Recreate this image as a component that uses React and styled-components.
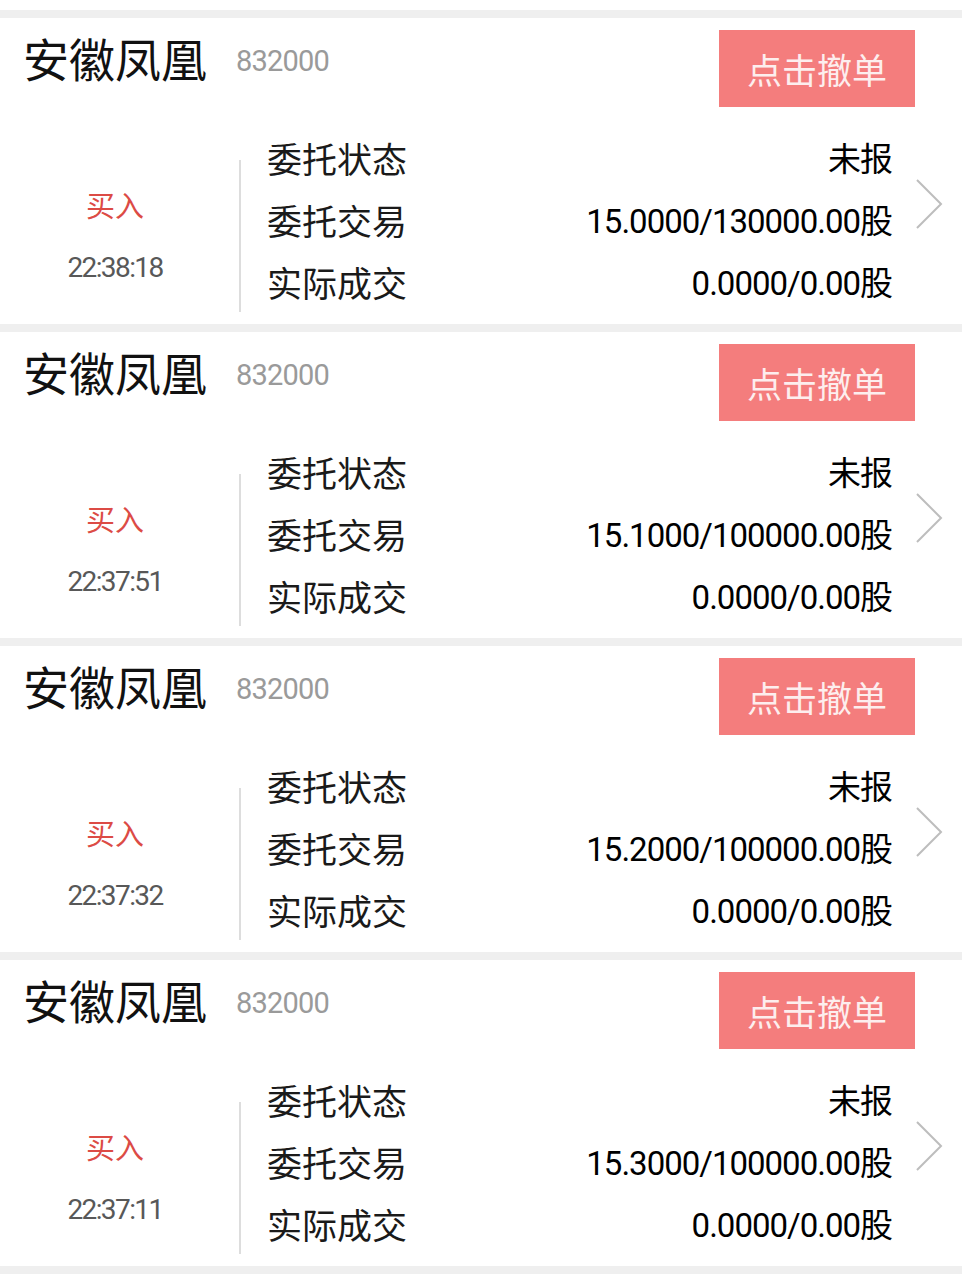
import React from 'react';
import styled, { createGlobalStyle } from 'styled-components';

const GlobalStyle = createGlobalStyle`
    body {
        margin: 0;
        background: #ffffff;
        font-family: Roboto, "Noto Sans CJK SC", sans-serif;
    }
`;

const Page = styled.div`
    width: 962px;
    padding-top: 10px;
`;

const Card = styled.div`
    border-top: 8px solid #efefef;
    height: 306px;
    box-sizing: content-box;
    display: flex;
    flex-direction: column;
    &:last-child {
        border-bottom: 8px solid #efefef;
    }
`;

const Header = styled.div`
    display: flex;
    align-items: flex-start;
    padding: 12px 47px 0 23px;
`;

const Title = styled.div`
    font-family: "Noto Sans CJK SC", sans-serif;
    font-size: 46px;
    line-height: 54px;
    color: #111;
`;

const Code = styled.div`
    font-family: Roboto, sans-serif;
    font-size: 29px;
    line-height: 54px;
    letter-spacing: -0.8px;
    color: #9a9a9a;
    margin-left: 29px;
    padding-top: 4px;
`;

const CancelButton = styled.div`
    margin-left: auto;
    width: 196px;
    height: 77px;
    background-color: #f47d7d;
    color: #fdeeee;
    font-family: "Noto Sans CJK SC", sans-serif;
    font-size: 35px;
    display: flex;
    align-items: center;
    justify-content: center;
    cursor: pointer;
`;

const Body = styled.div`
    display: flex;
    align-items: flex-end;
    margin-top: 19px;
    padding-right: 19px;
`;

const Side = styled.div`
    width: 230px;
    padding-right: 9px;
    height: 152px;
    border-right: 2px solid #dddddd;
    display: flex;
    flex-direction: column;
    align-items: center;
    justify-content: center;
    gap: 24px;
`;

const Direction = styled.div`
    font-family: "Noto Sans CJK SC", sans-serif;
    font-size: 29px;
    line-height: 40px;
    color: #dc4b45;
`;

const Time = styled.div`
    font-family: Roboto, sans-serif;
    font-size: 28px;
    line-height: 40px;
    letter-spacing: -1.6px;
    color: #585858;
`;

const Rows = styled.div`
    flex: 1;
    padding-left: 26px;
`;

const Row = styled.div`
    display: flex;
    align-items: center;
    justify-content: space-between;
    height: 62px;
`;

const Label = styled.div`
    font-family: "Noto Sans CJK SC", sans-serif;
    font-size: 35px;
    color: #1a1a1a;
`;

const Value = styled.div`
    font-family: Roboto, "Noto Sans CJK SC", sans-serif;
    font-size: 33px;
    letter-spacing: -1px;
    color: #000;
`;

const Chevron = styled.svg`
    align-self: flex-start;
    margin-top: 52px;
    margin-left: 23px;
    flex-shrink: 0;
`;

const orders = [
    { time: '22:38:18', trade: '15.0000/130000.00股' },
    { time: '22:37:51', trade: '15.1000/100000.00股' },
    { time: '22:37:32', trade: '15.2000/100000.00股' },
    { time: '22:37:11', trade: '15.3000/100000.00股' },
];

const OrderCard = ({ order }) => (
    <Card>
        <Header>
            <Title>安徽凤凰</Title>
            <Code>832000</Code>
            <CancelButton>点击撤单</CancelButton>
        </Header>
        <Body>
            <Side>
                <Direction>买入</Direction>
                <Time>{order.time}</Time>
            </Side>
            <Rows>
                <Row><Label>委托状态</Label><Value>未报</Value></Row>
                <Row><Label>委托交易</Label><Value>{order.trade}</Value></Row>
                <Row><Label>实际成交</Label><Value>0.0000/0.00股</Value></Row>
            </Rows>
            <Chevron width="28" height="52" viewBox="0 0 28 52">
                <path d="M2 2 L26 26 L2 50" fill="none" stroke="#bdbdbd" strokeWidth="2" />
            </Chevron>
        </Body>
    </Card>
);

export default function App() {
    return (
        <>
            <GlobalStyle />
            <Page>
                {orders.map(o => <OrderCard key={o.time} order={o} />)}
            </Page>
        </>
    );
}
